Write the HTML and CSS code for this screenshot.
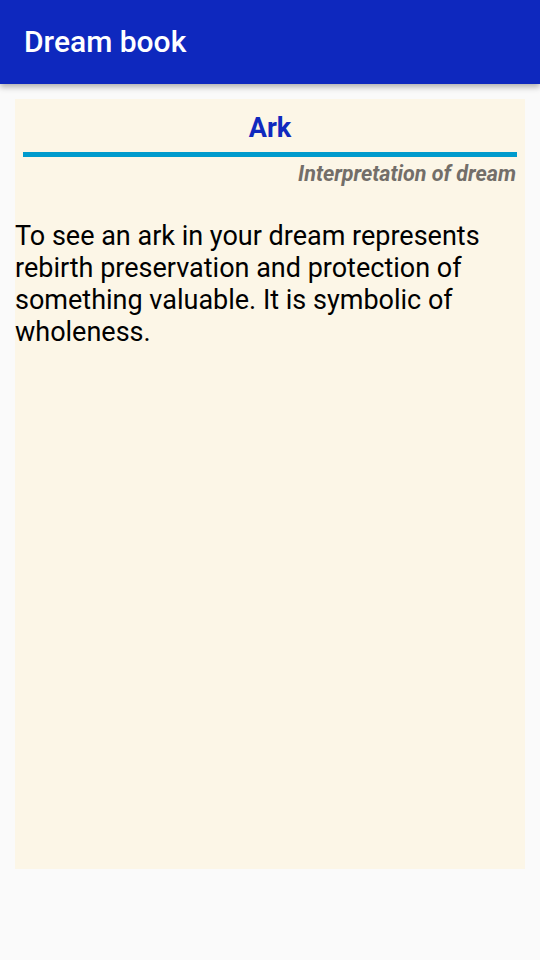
FILE: index.html
```html
<!DOCTYPE html>
<html lang="en">
<head>
<meta charset="UTF-8">
<meta name="viewport" content="width=device-width, initial-scale=1.0">
<title>Dream book</title>
<link rel="stylesheet" href="styles.css">
</head>
<body>
    <div class="toolbar">
        <h1>Dream book</h1>
    </div>

    <div class="card">
        <div class="title">Ark</div>
        <div class="divider"></div>
        <div class="subtitle">Interpretation of dream</div>

        <!-- Texto de la interpretacion -->
        <p class="text">To see an ark in your dream represents rebirth preservation and protection of something valuable. It is symbolic of wholeness.</p>
    </div>
</body>
</html>
```

FILE: styles.css
```css
body {
    margin: 0;
    padding: 0;
    font-family: Roboto, "Liberation Sans", Arial, sans-serif;
    background-color: #fafafa;
    color: #000;
}
.toolbar {
    height: 84px;
    background-color: #0e28be;
    box-shadow: 0 3px 6px rgba(0,0,0,0.3);
    display: flex;
    align-items: center;
    padding: 0 24px;
    position: relative;
}
.toolbar h1 {
    margin: 0;
    font-size: 30px;
    font-weight: 500;
    color: #fff;
    padding-bottom: 1px;
}
.card {
    margin: 15px 15px 0 15px;
    height: 770px;
    background-color: #fcf6e7;
    padding-top: 13px;
    box-sizing: border-box;
}
.title {
    text-align: center;
    font-size: 27px;
    font-weight: bold;
    color: #1029be;
}
.divider {
    height: 5px;
    margin: 8px 8px 0 8px;
    background-color: #009bcd;
}
.subtitle {
    text-align: right;
    font-size: 21.5px;
    font-weight: bold;
    font-style: italic;
    color: #736e69;
    margin-top: 4px;
    padding-right: 9px;
}
.text {
    margin: 34px 0 0 0;
    font-size: 27px;
    line-height: 32px;
}
```
